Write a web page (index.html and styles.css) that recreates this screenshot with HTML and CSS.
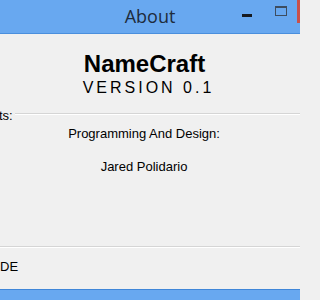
FILE: index.html
```html
<!DOCTYPE html>
<html>
<head>
<meta charset="utf-8">
<link rel="stylesheet" href="styles.css">
</head>
<body>
<div class="window">
  <div class="titlebar">
    <div class="spacer"></div>
    <div class="title">About</div>
    <div class="controls">
      <span class="minimize"></span>
      <span class="maximize"></span>
      <span class="close"></span>
    </div>
  </div>
  <div class="content">
    <div class="header">
      <div class="appname">NameCraft</div>
      <div class="version">VERSION 0.1</div>
    </div>
    <div class="group">
      <div class="group-head">
        <span class="group-label">ts:</span>
        <span class="group-line"></span>
      </div>
      <div class="credit-role">Programming And Design:</div>
      <div class="credit-name">Jared Polidario</div>
    </div>
    <div class="link">DE</div>
  </div>
  <div class="bottom-border"></div>
</div>
</body>
</html>
```
FILE: styles.css
```css
html, body {
  margin: 0;
  padding: 0;
  background: #f0f0f0;
}
body {
  width: 300px;
  height: 300px;
  overflow: hidden;
  font-family: "Liberation Sans", Arial, sans-serif;
  color: #000;
}
.window {
  display: flex;
  flex-direction: column;
  height: 300px;
}
.titlebar {
  height: 33px;
  background: #68a8f0;
  border-bottom: 1px solid #4a8fdd;
  display: grid;
  grid-template-columns: 1fr auto 1fr;
}
.title {
  font-family: "Open Sans", "Noto Sans", sans-serif;
  font-size: 18px;
  line-height: 33px;
  color: #1e2c3c;
}
.controls {
  display: flex;
  align-items: flex-start;
  justify-self: end;
}
.minimize {
  display: block;
  width: 10px;
  height: 3px;
  margin-top: 14px;
  background: #161a20;
}
.maximize {
  display: block;
  width: 10px;
  height: 7px;
  margin-top: 6px;
  margin-left: 23px;
  border: 1px solid #3d4d60;
  border-top-width: 2px;
}
.close {
  display: block;
  width: 3px;
  height: 23px;
  margin-left: 10px;
  background: #c9504a;
}
.content {
  display: flex;
  flex-direction: column;
  padding-top: 16px;
}
.header {
  text-align: center;
  padding-right: 11px;
}
.appname {
  font-size: 24px;
  font-weight: bold;
  line-height: 28px;
}
.version {
  font-size: 16px;
  line-height: 20px;
  letter-spacing: 3px;
  padding-left: 8px;
}
.group {
  margin-top: 10px;
  padding-bottom: 71px;
  border-bottom: 1px solid #d5d5d5;
  box-shadow: 0 1px 0 #ffffff;
}
.group-head {
  display: flex;
  align-items: flex-start;
  gap: 2px;
  font-size: 13px;
  line-height: 16px;
}
.group-label {
  margin-left: -1px;
}
.group-line {
  flex: 1;
  margin-top: 5px;
  height: 1px;
  background: #d5d5d5;
  border-bottom: 1px solid #ffffff;
}
.credit-role,
.credit-name {
  font-size: 13px;
  line-height: 16px;
  text-align: center;
  padding-right: 12px;
}
.credit-role {
  margin-top: 2px;
}
.credit-name {
  margin-top: 17px;
}
.link {
  margin-top: 12px;
  font-size: 13px;
  line-height: 16px;
}
.bottom-border {
  margin-top: auto;
  height: 10px;
  background: #68a8f0;
  border-top: 1px solid #3f86d8;
}
```
